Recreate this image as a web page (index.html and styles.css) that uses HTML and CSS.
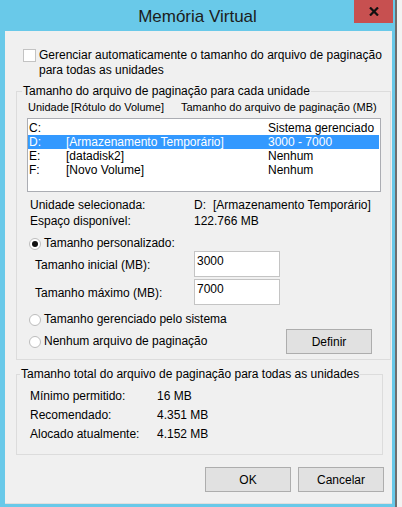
FILE: index.html
```html
<!DOCTYPE html>
<html lang="pt-BR">
<head>
<meta charset="utf-8">
<title>Memória Virtual</title>
<link rel="stylesheet" href="styles.css">
</head>
<body>
<div class="window">
  <div class="titlebar">
    <span class="title">Memória Virtual</span>
    <button class="close" aria-label="Fechar">
      <svg width="10" height="9" viewBox="0 0 10 9"><path d="M1 0.5 L9 8.5 M9 0.5 L1 8.5" stroke="#111" stroke-width="2.2" fill="none"/></svg>
    </button>
  </div>
  <div class="client">
    <label class="check-row">
      <span class="checkbox"></span>
      <span class="check-text">Gerenciar automaticamente o tamanho do arquivo de paginação<br>para todas as unidades</span>
    </label>

    <fieldset class="group group-drives">
      <legend>Tamanho do arquivo de paginação para cada unidade</legend>
      <div class="list-head"><span>Unidade</span><span>[Rótulo do Volume]</span><span>Tamanho do arquivo de paginação (MB)</span></div>
      <div class="listbox">
        <div class="row"><span>C:</span><span></span><span>Sistema gerenciado</span></div>
        <div class="row selected"><span>D:</span><span>[Armazenamento Temporário]</span><span>3000 - 7000</span></div>
        <div class="row"><span>E:</span><span>[datadisk2]</span><span>Nenhum</span></div>
        <div class="row"><span>F:</span><span>[Novo Volume]</span><span>Nenhum</span></div>
      </div>
      <div class="info">
        <span>Unidade selecionada:</span><span><span class="letter">D:</span>[Armazenamento Temporário]</span>
        <span>Espaço disponível:</span><span>122.766 MB</span>
      </div>
      <div class="radio-row r-custom"><span class="radio checked"></span><span>Tamanho personalizado:</span></div>
      <div class="size-grid">
        <span class="size-label">Tamanho inicial (MB):</span><input class="textbox" type="text" value="3000">
        <span class="size-label">Tamanho máximo (MB):</span><input class="textbox" type="text" value="7000">
      </div>
      <div class="radio-row r-system"><span class="radio"></span><span>Tamanho gerenciado pelo sistema</span></div>
      <div class="set-row">
        <div class="radio-row"><span class="radio"></span><span>Nenhum arquivo de paginação</span></div>
        <button class="btn btn-set">Definir</button>
      </div>
    </fieldset>

    <fieldset class="group group-total">
      <legend>Tamanho total do arquivo de paginação para todas as unidades</legend>
      <div class="totals">
        <span>Mínimo permitido:</span><span>16 MB</span>
        <span>Recomendado:</span><span>4.351 MB</span>
        <span>Alocado atualmente:</span><span>4.152 MB</span>
      </div>
    </fieldset>

    <div class="actions">
      <button class="btn">OK</button>
      <button class="btn">Cancelar</button>
    </div>
  </div>
</div>
</body>
</html>
```
FILE: styles.css
```css
* { box-sizing: border-box; }
html, body { margin: 0; padding: 0; }
body {
  background: #f3f3f3;
  font-family: "Liberation Sans", Arial, sans-serif;
  font-size: 12px;
  color: #000;
  width: 402px;
  height: 507px;
  overflow: hidden;
}
.window {
  width: 397px;
  height: 507px;
  background: #69c9e9;
  border-right: 2px solid #6e6e6e;
  display: flex;
  flex-direction: column;
  overflow: hidden;
}
.titlebar {
  height: 31px;
  flex: none;
  display: grid;
  grid-template-columns: 1fr auto 1fr;
}
.title {
  grid-column: 2;
  font-size: 17px;
  line-height: 29px;
  padding-top: 2px;
  color: #1c1c1c;
  white-space: nowrap;
}
.close {
  grid-column: 3;
  justify-self: end;
  align-self: start;
  width: 39px;
  height: 23px;
  margin: 0 2px 0 0;
  padding: 0;
  border: 0;
  background: #c75050;
  display: flex;
  align-items: center;
  justify-content: center;
}
.client {
  margin-left: 5px;
  width: 387px;
  height: 473px;
  flex: none;
  background: #f0f0f0;
  border-bottom: 1px solid #dfdfdf;
  display: flex;
  flex-direction: column;
  align-items: flex-start;
}
.check-row {
  margin: 17px 0 0 18px;
  display: flex;
  align-items: flex-start;
  gap: 3px;
  line-height: 15px;
}
.checkbox {
  width: 13px;
  height: 13px;
  flex: none;
  margin-top: 1px;
  background: #fff;
  border: 1px solid #c3c3c3;
}
.group {
  margin: 0 0 0 11px;
  padding: 0;
  border: 1px solid #dcdcdc;
  min-width: 0;
}
.group legend {
  padding: 0 1px;
  margin-left: 5px;
  line-height: 15px;
}
.group-drives {
  margin-top: 6px;
  width: 375px;
  padding-bottom: 5px;
}
.list-head {
  margin-top: 1px;
  padding-left: 11px;
  display: grid;
  grid-template-columns: 43px 110px auto;
  font-size: 11px;
  line-height: 15px;
  white-space: nowrap;
}
.listbox {
  margin: 3px 0 0 10px;
  width: 354px;
  height: 74px;
  background: #fff;
  border: 1px solid #abadb3;
  padding-top: 2px;
}
.row {
  display: grid;
  grid-template-columns: 37px 202px auto;
  padding-left: 1px;
  margin-right: 1px;
  height: 14px;
  line-height: 14px;
  white-space: nowrap;
}
.row.selected {
  background: #3399ff;
  color: #fff;
}
.info {
  margin-top: 5px;
  padding-left: 13px;
  display: grid;
  grid-template-columns: 164px auto;
  line-height: 16px;
  white-space: nowrap;
}
.letter {
  display: inline-block;
  width: 19px;
}
.radio-row {
  display: flex;
  align-items: center;
  gap: 3px;
  line-height: 15px;
  padding-left: 12px;
  white-space: nowrap;
}
.radio {
  width: 12px;
  height: 12px;
  flex: none;
  border-radius: 50%;
  border: 1px solid #bcbcbc;
  background: #fff;
  display: flex;
  align-items: center;
  justify-content: center;
}
.radio.checked::after {
  content: "";
  width: 6px;
  height: 6px;
  border-radius: 50%;
  background: #111;
}
.r-custom { margin-top: 7px; }
.size-grid {
  padding-left: 18px;
  display: grid;
  grid-template-columns: 159px 86px;
  row-gap: 2px;
}
.size-label {
  padding-top: 7px;
  line-height: 15px;
  white-space: nowrap;
}
.textbox {
  width: 86px;
  height: 26px;
  margin: 0;
  border: 1px solid #c4c4c4;
  background: #fff;
  padding: 1px 3px 8px 2px;
  font-family: inherit;
  font-size: 12px;
  line-height: 15px;
  color: #000;
  outline: none;
}
.r-system { margin-top: 7px; }
.set-row {
  margin-top: 2px;
  display: flex;
  align-items: center;
  height: 25px;
}
.btn {
  width: 86px;
  height: 25px;
  margin: 0;
  padding: 0;
  border: 1px solid #adadad;
  background: #e1e1e1;
  font-family: inherit;
  font-size: 12px;
  color: #000;
}
.btn-set {
  margin-left: auto;
  margin-right: 18px;
}
.group-total {
  margin-top: 7px;
  width: 367px;
  padding-bottom: 10px;
}
.group-total legend { margin-left: 3px; }
.totals {
  margin-top: 5px;
  padding-left: 13px;
  display: grid;
  grid-template-columns: 127px auto;
  line-height: 19px;
  white-space: nowrap;
}
.actions {
  align-self: stretch;
  margin-top: 12px;
  padding-right: 8px;
  display: flex;
  justify-content: flex-end;
  gap: 7px;
}
```
